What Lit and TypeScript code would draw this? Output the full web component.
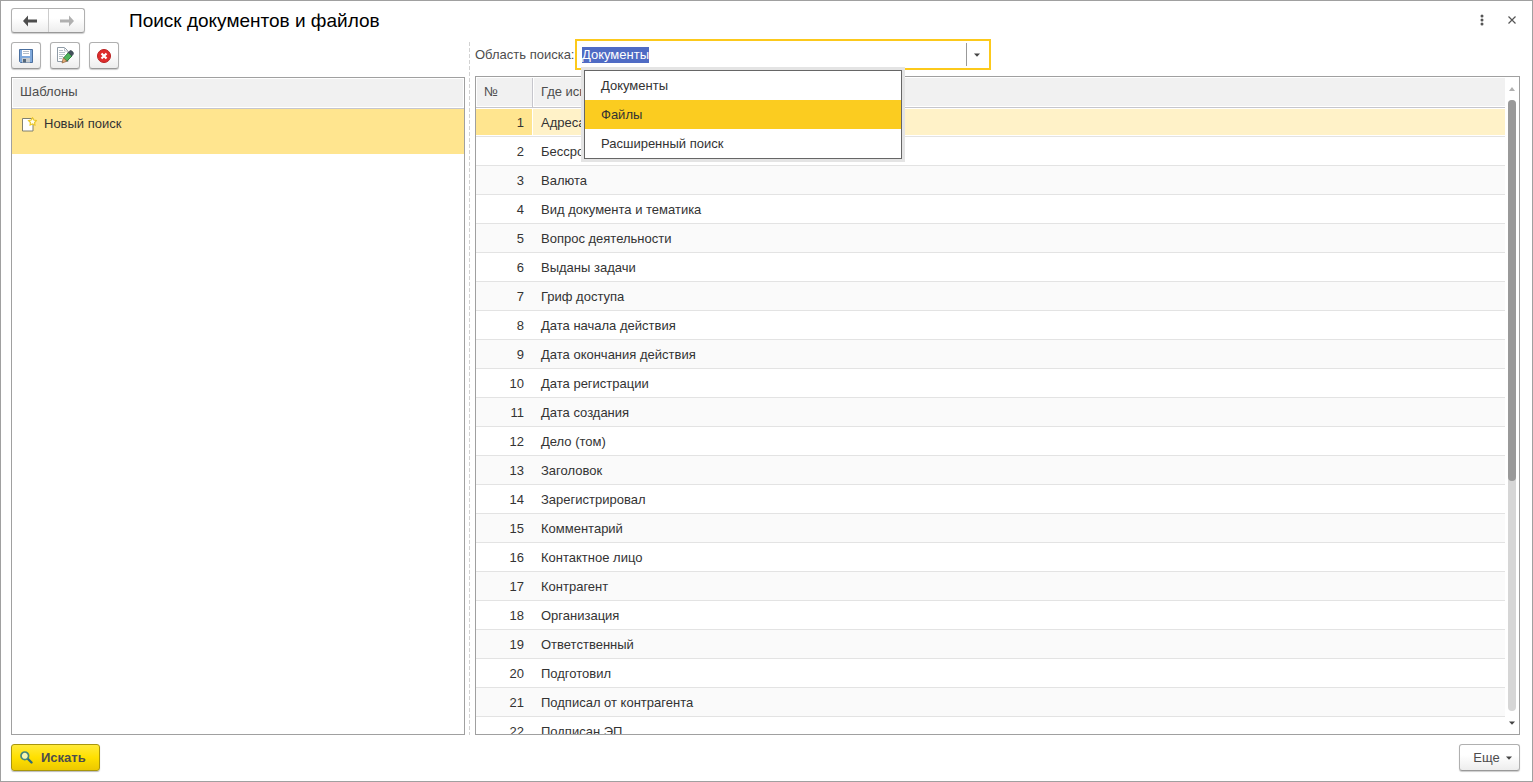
import { LitElement, html, css, svg } from "lit";
import { customElement, property, state, query } from "lit/decorators.js";
import { classMap } from "lit/directives/class-map.js";

const FIELDS = [
  "Адресат", "Бессрочный", "Валюта", "Вид документа и тематика", "Вопрос деятельности",
  "Выданы задачи", "Гриф доступа", "Дата начала действия", "Дата окончания действия",
  "Дата регистрации", "Дата создания", "Дело (том)", "Заголовок", "Зарегистрировал",
  "Комментарий", "Контактное лицо", "Контрагент", "Организация", "Ответственный",
  "Подготовил", "Подписал от контрагента", "Подписан ЭП",
];

const AREAS = ["Документы", "Файлы", "Расширенный поиск"];

const arrowBack = svg`<svg width="14" height="12" viewBox="0 0 14 12"><path d="M0 6 5 .5v4h9v3H5v4z" fill="#4d4d4d"/></svg>`;
const arrowForward = svg`<svg width="14" height="12" viewBox="0 0 14 12"><path d="M14 6 9 .5v4H0v3h9v4z" fill="#b0b0b0"/></svg>`;
const iconSave = svg`<svg width="14" height="14" viewBox="0 0 14 14">
  <path d="M.5.5h13v13h-12l-1-1z" fill="#7fa9dc" stroke="#4a6f9f"/>
  <path d="M3 1h8v6H3z" fill="#fff"/><path d="M4 2.500h6M4 4.500h6" stroke="#b3bdc8"/>
  <path d="M3 9h8v4.500H3z" fill="#c6ccd0"/><path d="M4 10h3v3.500H4z" fill="#55677a"/></svg>`;
const iconEdit = svg`<svg width="17" height="17" viewBox="0 0 17 17">
  <path d="M.5.5h7l3.500 3.500v10.500H.5z" fill="#fff" stroke="#8f9ba6"/>
  <path d="M7.500.5v3.500H11M2 3.500h4M2 5.500h6M2 7.500h6M2 9.500h4M2 11.500h3" fill="none" stroke="#b9c2ca"/>
  <path d="m6.500 11 5-5.500 3.500 3.500-5 5z" fill="#4fb55a" stroke="#2f8040"/>
  <path d="m11.200 5.500 1.800-1.900q1.400-.3 2.600 1t.8 2.500L14.800 9z" fill="#43505b" stroke="#36424c" stroke-width=".6"/>
  <path d="M6.300 10.800 9.800 14.300 5 16z" fill="#e6ac78" stroke="#8a6038" stroke-width=".7"/></svg>`;
const iconDelete = svg`<svg width="14" height="14" viewBox="0 0 14 14">
  <circle cx="7" cy="7" r="6.500" fill="#de2c2c" stroke="#b92020"/>
  <path d="m4.500 4.500 5 5m0-5-5 5" stroke="#fff" stroke-width="2.200"/></svg>`;
const iconSheet = svg`<svg width="15" height="15" viewBox="0 0 15 15">
  <path d="M.5 1.500h10.500v12.500H.5z" fill="#fff" stroke="#80806f"/>
  <path d="m10.500.8 1.300 2.200 2.600.6-1.800 1.900.3 2.600-2.400-1.100-2.400 1.100.3-2.600-1.800-1.900 2.600-.6z" fill="#fffde8" stroke="#ecc92c" stroke-width="1.200"/></svg>`;
const iconSearch = svg`<svg width="13" height="13" viewBox="0 0 13 13">
  <path d="m7.500 7.500 4 4" stroke="#2e6a78" stroke-width="2.400" stroke-linecap="round"/>
  <circle cx="4.800" cy="4.800" r="3.800" fill="#f6f5b0" stroke="#43857c" stroke-width="1.700"/></svg>`;
const caretDown = svg`<svg width="6" height="4" viewBox="0 0 6 4"><path d="M0 .5h6L3 3.800z" fill="#444"/></svg>`;
const caretUp = svg`<svg width="6" height="4" viewBox="0 0 6 4"><path d="M0 4h6L3 0z" fill="#b0b0b0"/></svg>`;
const iconMore = svg`<svg width="4" height="12" viewBox="0 0 4 12" fill="#555"><circle cx="2" cy="2" r="1.500"/><circle cx="2" cy="6" r="1.500"/><circle cx="2" cy="10" r="1.500"/></svg>`;
const iconClose = svg`<svg width="8" height="8" viewBox="0 0 8 8"><path d="m.5.5 7 7m0-7-7 7" stroke="#555" stroke-width="1.200"/></svg>`;

const controls = css`
  * { box-sizing: border-box; }
  svg { display: block; flex: none; }
  button {
    display: flex;
    align-items: center;
    justify-content: center;
    margin: 0;
    padding: 0;
    border: 0;
    background: none;
    color: inherit;
    font: inherit;
  }
`;

@customElement("search-area-field")
class SearchAreaField extends LitElement {
  @property() value = AREAS[0];
  @state() private open = true;
  @state() private active = 1;
  @query("input") private input!: HTMLInputElement;

  static styles = [controls, css`
    :host { display: flex; align-items: center; }
    label { flex: 0 0 100px; color: #4d4d4d; white-space: nowrap; }
    .box {
      position: relative;
      display: flex;
      align-items: center;
      flex: 0 1 416px;
      height: 31px;
      border: 2px solid #fcc91b;
      background: #fff;
    }
    input {
      flex: 1;
      min-width: 0;
      height: 16px;
      margin: 0;
      padding: 0 5px;
      border: 0;
      outline: 0;
      background: none;
      color: #333;
      font: inherit;
      line-height: 16px;
    }
    input::selection { background: #4f6bc4; color: #fff; }
    .toggle { width: 23px; height: 23px; border-left: 1px solid #999; }
    .toggle svg { margin-right: 3px; }
    .menu {
      position: absolute;
      z-index: 2;
      top: 29px;
      left: 7px;
      width: 318px;
      margin: 0;
      padding: 0;
      border: 1px solid #666;
      box-shadow: 0 0 0 3px #e4e4e4;
      background: #fff;
      list-style: none;
    }
    .option { padding: 0 16px; line-height: 29px; color: #333; }
    .active { background: #fbcc20; }
  `];

  firstUpdated() {
    this.input.focus();
    this.input.select();
  }

  private choose(area: string) {
    this.value = area;
    this.open = false;
  }

  render() {
    return html`
      <label for="area">Область поиска:</label>
      <div class="box">
        <input id="area" type="text" role="combobox" aria-expanded=${this.open} aria-controls="areas" .value=${this.value} />
        <button class="toggle" type="button" aria-label="Выбрать" @click=${() => (this.open = !this.open)}>${caretDown}</button>
        ${this.open ? html`
          <ul class="menu" id="areas" role="listbox">
            ${AREAS.map((area, i) => html`
              <li class=${classMap({ option: true, active: i === this.active })} role="option"
                aria-selected=${i === this.active}
                @mouseenter=${() => (this.active = i)} @click=${() => this.choose(area)}>${area}</li>`)}
          </ul>` : null}
      </div>`;
  }
}

@customElement("fields-table")
class FieldsTable extends LitElement {
  @state() private selected = 0;

  static styles = [controls, css`
    :host { display: flex; min-height: 0; border: 1px solid #a0a0a0; background: #fff; }
    .view { flex: 1; min-width: 0; overflow: hidden; padding-top: 1px; }
    table { width: 100%; border-spacing: 0; table-layout: fixed; }
    th, td { padding: 0 8px; text-align: left; font-weight: normal; white-space: nowrap; }
    th {
      height: 30px;
      padding-bottom: 2px;
      border-bottom: 1px solid #c6c6cc;
      background: #f1f1f1;
      box-shadow: inset 1px -1px #fff;
      color: #4d4d4d;
    }
    td { height: 29px; padding-top: 2px; border-bottom: 1px solid #e3e3e3; color: #333; }
    .num { width: 57px; }
    th.num { border-right: 1px solid #c6c6cc; }
    td.num { padding-right: 9px; text-align: right; }
    tr:nth-child(odd) td { background: #fafafa; }
    tr.selected td { background: #fff2c8; box-shadow: inset 0 1px #fff, inset 0 -1px #fff; }
    tr.selected td.num { background: #ffe58f; box-shadow: inset 0 1px #fff, inset -1px -1px #fff; }
    .scroll { display: flex; flex-direction: column; align-items: center; width: 14px; }
    .step { width: 14px; height: 23px; }
    .track { flex: 1; width: 8px; border-radius: 4px; background: #d6d6d6; }
    .thumb { border-radius: 4px; background: #999; }
  `];

  render() {
    return html`
      <div class="view">
        <table>
          <thead><tr><th class="num" scope="col">№</th><th scope="col">Где искать</th></tr></thead>
          <tbody>
            ${FIELDS.map((name, i) => html`
              <tr class=${classMap({ selected: i === this.selected })} @click=${() => (this.selected = i)}>
                <td class="num">${i + 1}</td><td>${name}</td>
              </tr>`)}
          </tbody>
        </table>
      </div>
      <div class="scroll">
        <button class="step" type="button" aria-label="Вверх">${caretUp}</button>
        <div class="track"><div class="thumb" style="height:62.4%"></div></div>
        <button class="step" type="button" aria-label="Вниз">${caretDown}</button>
      </div>`;
  }
}

@customElement("app-root")
class AppRoot extends LitElement {
  static styles = [controls, css`
    :host {
      display: flex;
      flex-direction: column;
      box-sizing: border-box;
      height: 100vh;
      padding: 7px 12px 10px 10px;
      border: 1px solid #a0a0a0;
      background: #fff;
      color: #333;
      font: 13px/16px "Liberation Sans", Arial, sans-serif;
    }
    header { display: flex; align-items: center; height: 25px; }
    .history { display: flex; }
    .raised {
      border: 1px solid #b0b0b0;
      border-bottom-color: #999;
      border-radius: 3px;
      background: linear-gradient(#fff 40%, #ededed);
      box-shadow: 0 1px 1px #ccc;
    }
    .history button { width: 36px; height: 23px; }
    .history button + button { border-left: 1px solid #ccc; }
    h1 { flex: 1; margin: 0 0 0 44px; color: #000; font-size: 19px; font-weight: normal; line-height: 24px; }
    .window { display: flex; gap: 14px; padding-bottom: 2px; }
    .window button { width: 16px; height: 16px; }
    main {
      display: grid;
      grid-template-columns: minmax(0, 454fr) 10px minmax(0, 1045fr);
      flex: 1;
      min-height: 0;
      margin-top: 6px;
    }
    .templates, .search { display: flex; flex-direction: column; min-height: 0; }
    .templates { padding-top: 3px; gap: 8px; }
    .search { gap: 6px; }
    .toolbar { display: flex; gap: 9px; }
    .tool { width: 30px; height: 27px; }
    .splitter {
      width: 1px;
      margin: 3px 0 0 4px;
      background: repeating-linear-gradient(#d2d2d2 0 4px, transparent 4px 6px);
    }
    .list { flex: 1; border: 1px solid #a0a0a0; }
    .list table { width: 100%; border-spacing: 0; }
    .list th { height: 31px; padding: 0 8px 2px; border-bottom: 1px solid #c6c6cc; background: #f1f1f1; box-shadow: inset 0 0 0 1px #fff; color: #4d4d4d; font-weight: normal; text-align: left; }
    .list td { height: 45px; padding: 7px 10px; background: #ffe58f; vertical-align: top; }
    .item { display: flex; align-items: center; gap: 7px; }
    fields-table { flex: 1; }
    footer { display: flex; justify-content: space-between; margin-top: 9px; }
    .go {
      justify-content: flex-start;
      gap: 8px;
      width: 89px;
      height: 27px;
      padding-left: 8px;
      border: 1px solid #a8960c;
      border-radius: 3px;
      background: linear-gradient(#ffea3a, #ffe000 50%, #ecc800);
      box-shadow: 0 1px 1px #bbb;
      color: #4d4d4d;
      font-weight: bold;
    }
    .more { gap: 6px; width: 61px; height: 27px; padding-left: 6px; color: #4d4d4d; }
  `];

  render() {
    return html`
      <header>
        <div class="history raised">
          <button type="button" aria-label="Назад">${arrowBack}</button>
          <button type="button" aria-label="Вперед">${arrowForward}</button>
        </div>
        <h1>Поиск документов и файлов</h1>
        <div class="window">
          <button type="button" aria-label="Меню">${iconMore}</button>
          <button type="button" aria-label="Закрыть">${iconClose}</button>
        </div>
      </header>
      <main>
        <section class="templates">
          <div class="toolbar">
            <button class="tool raised" type="button" aria-label="Сохранить">${iconSave}</button>
            <button class="tool raised" type="button" aria-label="Изменить">${iconEdit}</button>
            <button class="tool raised" type="button" aria-label="Удалить">${iconDelete}</button>
          </div>
          <div class="list">
            <table>
              <thead><tr><th scope="col">Шаблоны</th></tr></thead>
              <tbody><tr><td><div class="item">${iconSheet}<span>Новый поиск</span></div></td></tr></tbody>
            </table>
          </div>
        </section>
        <div class="splitter"></div>
        <section class="search">
          <search-area-field></search-area-field>
          <fields-table></fields-table>
        </section>
      </main>
      <footer>
        <button class="go" type="button">${iconSearch}Искать</button>
        <button class="more raised" type="button">Еще ${caretDown}</button>
      </footer>`;
  }
}
